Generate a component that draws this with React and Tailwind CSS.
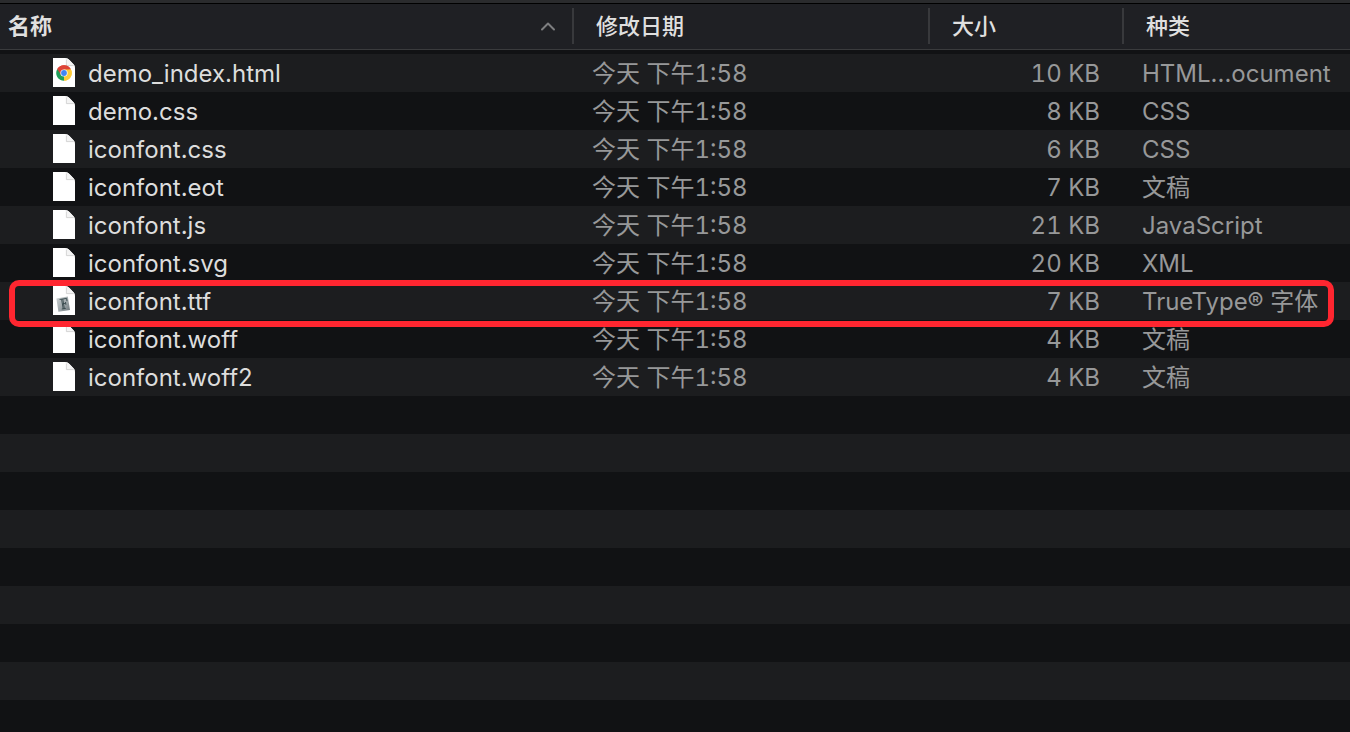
import React from "react";

const files = [
  { name: "demo_index.html", size: "10 KB", kind: "HTML...ocument", icon: "chrome" },
  { name: "demo.css", size: "8 KB", kind: "CSS" },
  { name: "iconfont.css", size: "6 KB", kind: "CSS" },
  { name: "iconfont.eot", size: "7 KB", kind: "文稿" },
  { name: "iconfont.js", size: "21 KB", kind: "JavaScript" },
  { name: "iconfont.svg", size: "20 KB", kind: "XML" },
  { name: "iconfont.ttf", size: "7 KB", kind: "TrueType® 字体", icon: "font", marked: true },
  { name: "iconfont.woff", size: "4 KB", kind: "文稿" },
  { name: "iconfont.woff2", size: "4 KB", kind: "文稿" },
];

function ChromeMark() {
  return (
    <g>
      <path d="M11 15 L4.25 11.1 A7.8 7.8 0 0 1 17.75 11.1 Z" fill="#dd4437" />
      <path d="M11 15 L17.75 11.1 A7.8 7.8 0 0 1 11 22.8 Z" fill="#fdcb3a" />
      <path d="M11 15 L11 22.8 A7.8 7.8 0 0 1 4.25 11.1 Z" fill="#1f9d58" />
      <path d="M11 11.4 H17.9 A7.8 7.8 0 0 0 4.25 11.1 L7.9 16.8 Z" fill="#dd4437" />
      <path d="M14.1 16.8 L11 22.8 A7.8 7.8 0 0 0 17.9 11.4 H11 Z" fill="#fdcb3a" />
      <circle cx="11" cy="15" r="3.6" fill="#fff" />
      <circle cx="11" cy="15" r="2.9" fill="#4285f4" />
    </g>
  );
}

function FontMark() {
  return (
    <g>
      <path d="M3.4 12.4 L14.8 10.4 L17 24 L5.4 25.8 Z" fill="url(#tile)" />
      <path
        d="M6.6 13.5 L13.6 12.4 L14 15.2 M8.6 13.3 L10.2 22.8 M9.8 13.1 L11.3 22.6 M8.8 23 L12.8 22.4 M9.6 17.8 L12.6 17.3 M12.5 16 L12.9 18.8"
        stroke="#35474b"
        strokeWidth="0.9"
        fill="none"
      />
    </g>
  );
}

function FileIcon({ type }) {
  return (
    <svg viewBox="0 0 22 29" className="h-[29px] w-[22px] shrink-0" aria-hidden="true">
      <defs>
        <linearGradient id="tile" x1="0" y1="0" x2="1" y2="1">
          <stop offset="0" stopColor="#cfd4d5" />
          <stop offset="0.6" stopColor="#9aa3a6" />
          <stop offset="1" stopColor="#687276" />
        </linearGradient>
      </defs>
      <path d="M0 0 H12 C14.5 0 16 1.6 17.6 3.2 L20 5.7 C21.3 7 22 8 22 10 V29 H0 Z" fill="#fff" />
      <path d="M13.2 0.3 C14 2.5 14 5 13.5 7.8 C16.5 7.2 19.8 7.4 21.9 9 C21.6 7.4 21 6.7 20 5.7 L17.6 3.2 C16 1.6 15 0.5 13.2 0.3 Z" fill="#f4f4f4" />
      <path d="M13.4 1.5 V7.6 H20.6" stroke="#cccccc" strokeWidth="0.8" fill="none" />
      {type === "chrome" && <ChromeMark />}
      {type === "font" && <FontMark />}
    </svg>
  );
}

function HeaderCell({ label, className, sorted, last }) {
  return (
    <th scope="col" aria-sort={sorted ? "ascending" : undefined} className="h-[46px] border-b border-[#3a3b3d] p-0 pt-1 align-top">
      <button
        type="button"
        className={`flex h-9 w-full items-center justify-between text-[22px] leading-9 text-[#dfdfdf] ${last ? "" : "border-r-2 border-[#38393c]"} ${className}`}
      >
        {label}
        {sorted && (
          <svg viewBox="0 0 16 10" className="h-[10px] w-4" aria-hidden="true">
            <path d="M2 8.5 L8 2.5 L14 8.5" fill="none" stroke="#7d7e80" strokeWidth="2" strokeLinecap="round" strokeLinejoin="round" />
          </svg>
        )}
      </button>
    </th>
  );
}

export default function App() {
  return (
    <main className="flex min-h-screen flex-col bg-[#111214] font-['Inter','Noto_Sans_CJK_SC',sans-serif]">
      <div className="h-1 border-b border-black bg-[#2a2b2d]" />
      <div className="flex-1 bg-[repeating-linear-gradient(to_bottom,#1c1d1f_0px,#1c1d1f_38px,#111214_38px,#111214_76px)] bg-[position:0_50px] bg-no-repeat">
        <table className="w-full table-fixed border-separate border-spacing-0 text-left">
          <colgroup>
            <col className="w-[574px]" />
            <col className="w-[356px]" />
            <col className="w-[194px]" />
            <col />
          </colgroup>
          <thead className="bg-[#1f2024]">
            <tr>
              <HeaderCell label="名称" className="pr-4 pl-2 font-bold" sorted />
              <HeaderCell label="修改日期" className="pl-[22px] font-medium" />
              <HeaderCell label="大小" className="pl-[22px] font-medium" />
              <HeaderCell label="种类" className="pl-[22px] font-medium" last />
            </tr>
          </thead>
          <tbody className="text-2xl text-[#979899] before:block before:h-1">
            {files.map((file) => (
              <tr key={file.name} className="relative h-[38px] whitespace-nowrap">
                <td className="p-0 pl-[53px]">
                  <div className="flex h-[38px] items-start gap-[13px] pt-1 leading-8 text-[#dddddd]">
                    <FileIcon type={file.icon} />
                    {file.name}
                  </div>
                </td>
                <td className="p-0 pt-0.5 pl-[18px] leading-9 tabular-nums">今天 下午1:58</td>
                <td className="p-0 pt-0.5 pr-6 text-right leading-9 tabular-nums">{file.size}</td>
                <td className="p-0 pt-0.5 pl-[18px] leading-9">
                  {file.kind}
                  {file.marked && (
                    <span className="pointer-events-none absolute -top-0.5 right-4 -bottom-[7px] left-[9px] z-10 rounded-[10px] border-[6px] border-[#ff2630]" />
                  )}
                </td>
              </tr>
            ))}
          </tbody>
        </table>
      </div>
    </main>
  );
}
